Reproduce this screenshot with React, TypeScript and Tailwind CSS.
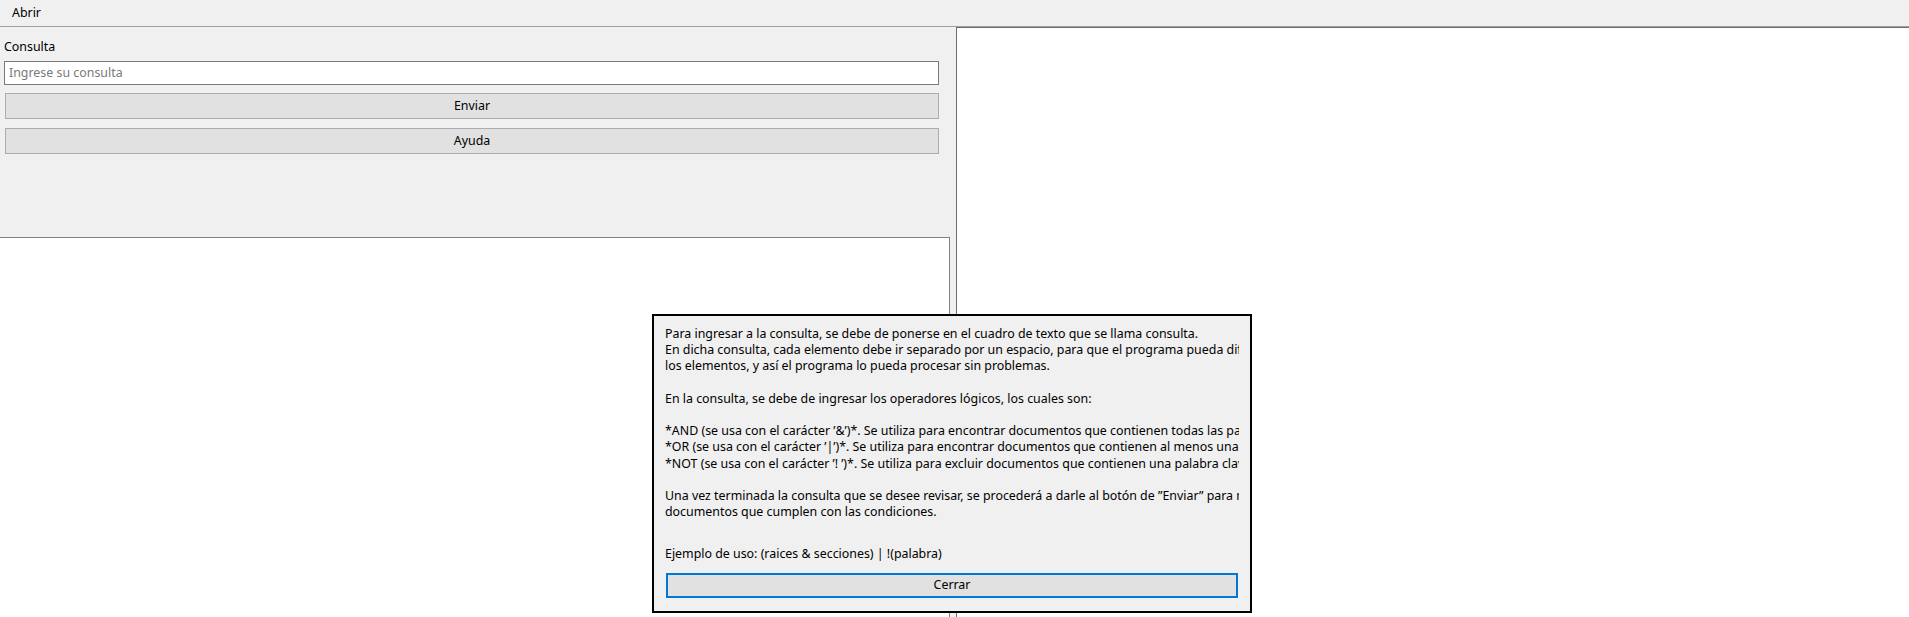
import React from "react";

const font = { fontFamily: '"Noto Sans", "Segoe UI", sans-serif' };

export default function App() {
  const lines1 = [
    "Para ingresar a la consulta, se debe de ponerse en el cuadro de texto que se llama consulta.",
    "En dicha consulta, cada elemento debe ir separado por un espacio, para que el programa pueda diferenciar entre",
    "los elementos, y así el programa lo pueda procesar sin problemas.",
    "",
    "En la consulta, se debe de ingresar los operadores lógicos, los cuales son:",
    "",
    "*AND (se usa con el carácter ’&’)*. Se utiliza para encontrar documentos que contienen todas las palabras clave.",
    "*OR (se usa con el carácter ’|’)*. Se utiliza para encontrar documentos que contienen al menos una palabra clave.",
    "*NOT (se usa con el carácter ’! ’)*. Se utiliza para excluir documentos que contienen una palabra clave.",
    "",
    "Una vez terminada la consulta que se desee revisar, se procederá a darle al botón de ”Enviar” para mostrar los",
    "documentos que cumplen con las condiciones.",
  ];
  return (
    <div
      className="relative w-[1909px] h-[617px] overflow-hidden bg-[#f0f0f0] text-[12.4px] text-black flex flex-col"
      style={font}
    >
      {/* menu bar */}
      <div className="h-[27px] shrink-0 bg-[#f0f0f0] border-b border-[#a0a0a0] flex items-center">
        <span className="ml-[12px] leading-none">Abrir</span>
      </div>

      <div className="flex flex-1 min-h-0">
        {/* left column */}
        <div className="w-[950px] shrink-0 flex flex-col">
          <div className="h-[210px] shrink-0 pl-[4px] pr-[11px] pt-[12px] flex flex-col">
            <div className="h-[16px] leading-[16px]">Consulta</div>
            <div className="mt-[6px] h-[24px] bg-white border border-[#7a7a7a] flex items-center pl-[4px] text-[#7a7a7a]">
              Ingrese su consulta
            </div>
            <div className="mt-[8px] ml-[1px] h-[26px] bg-[#e1e1e1] border border-[#adadad] flex items-center justify-center">
              Enviar
            </div>
            <div className="mt-[9px] ml-[1px] h-[26px] bg-[#e1e1e1] border border-[#adadad] flex items-center justify-center">
              Ayuda
            </div>
          </div>
          <div className="flex-1 bg-white border-t border-r border-[#828282]" />
        </div>
        {/* splitter */}
        <div className="w-[6px] shrink-0" />
        {/* right panel */}
        <div className="flex-1 bg-white border-l border-t border-[#6e6e6e]" />
      </div>

      {/* help dialog */}
      <div className="absolute left-[652px] top-[314px] w-[600px] h-[299px] bg-[#f0f0f0] border-2 border-black flex flex-col px-[11px] pt-[10px]">
        <div className="overflow-hidden whitespace-pre leading-[16.2px]">
          {lines1.map((l, i) => (
            <div key={i} className="h-[16.2px]">{l || "\u00a0"}</div>
          ))}
        </div>
        <div className="mt-[26px] whitespace-pre leading-[16px] overflow-hidden">
          Ejemplo de uso: (raices &amp; secciones) | !(palabra)
        </div>
        <div className="mt-[11px] mx-[1px] h-[25px] bg-[#e1e1e1] border-2 border-[#0078d7] flex items-center justify-center">
          Cerrar
        </div>
      </div>
    </div>
  );
}
